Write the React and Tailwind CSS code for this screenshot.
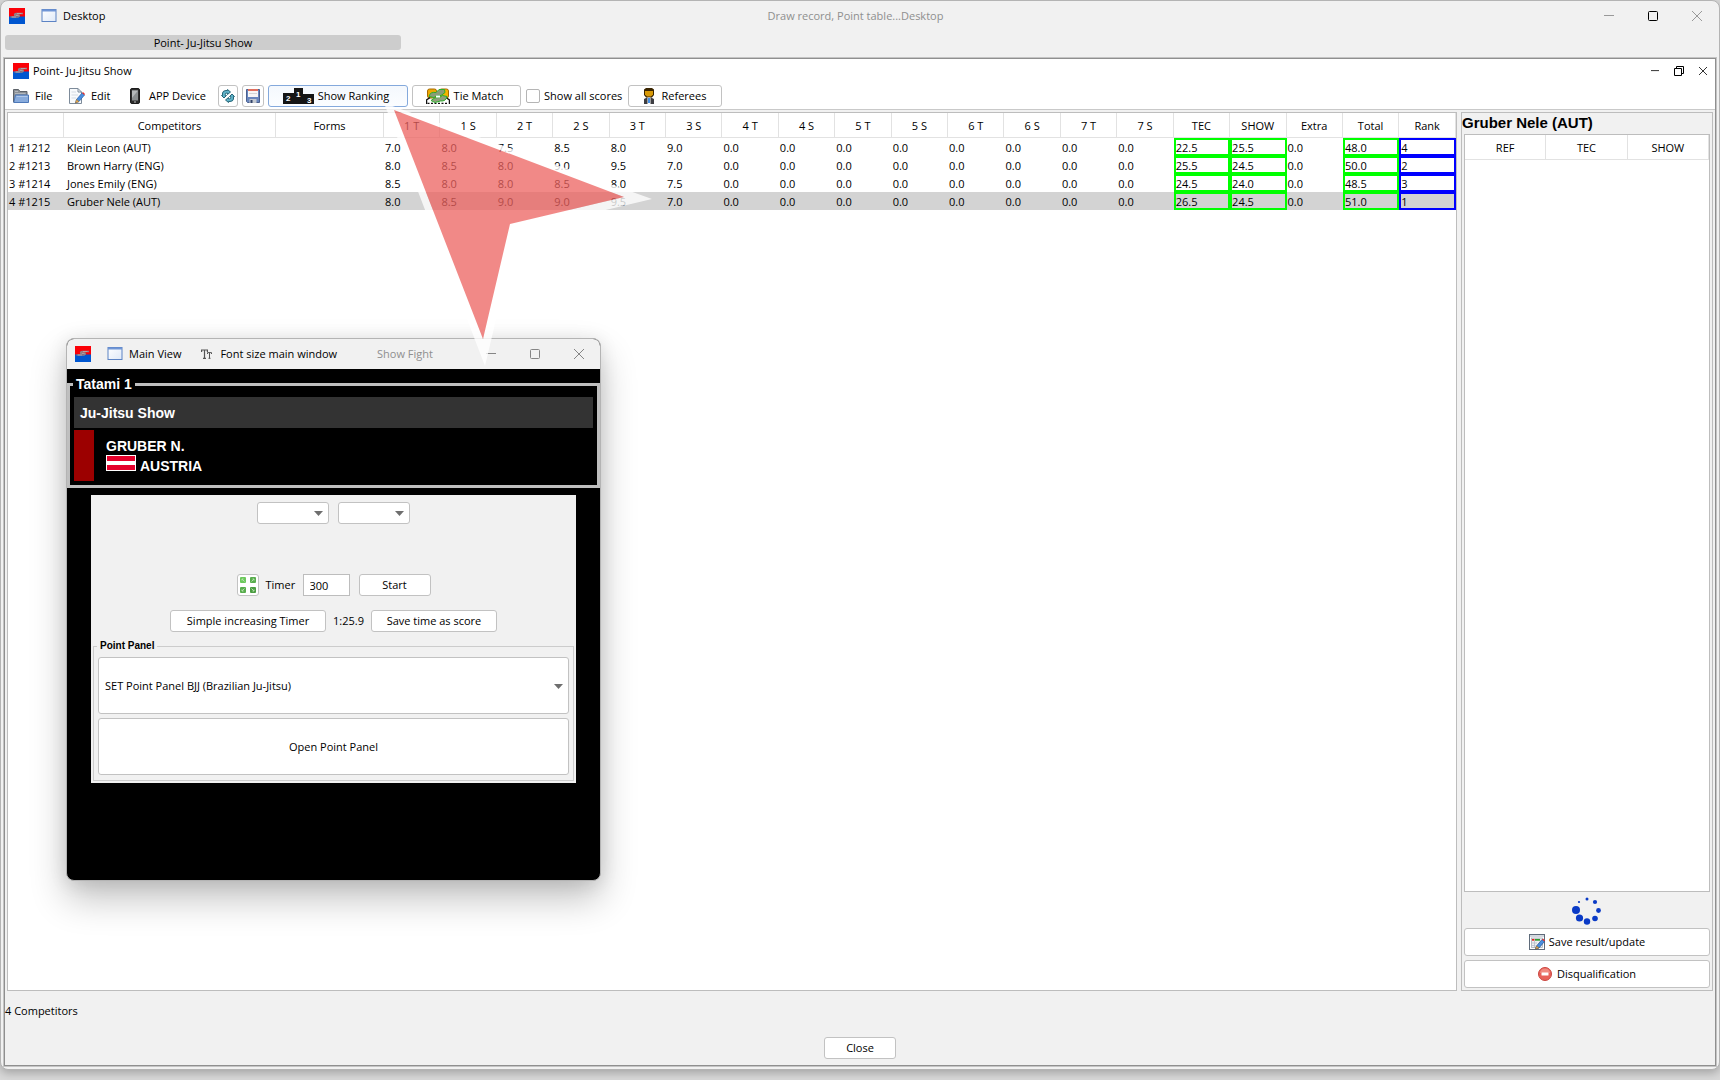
import React from 'react';

const scoreColumns = ['1 T', '1 S', '2 T', '2 S', '3 T', '3 S', '4 T', '4 S', '5 T', '5 S', '6 T', '6 S', '7 T', '7 S'];

const competitors = [
  { id: '1 #1212', name: 'Klein Leon (AUT)', scores: ['7.0', '8.0', '7.5', '8.5', '8.0', '9.0'], tec: '22.5', show: '25.5', total: '48.0', rank: '4' },
  { id: '2 #1213', name: 'Brown Harry (ENG)', scores: ['8.0', '8.5', '8.0', '9.0', '9.5', '7.0'], tec: '25.5', show: '24.5', total: '50.0', rank: '2' },
  { id: '3 #1214', name: 'Jones Emily (ENG)', scores: ['8.5', '8.0', '8.0', '8.5', '8.0', '7.5'], tec: '24.5', show: '24.0', total: '48.5', rank: '3' },
  { id: '4 #1215', name: 'Gruber Nele (AUT)', scores: ['8.0', '8.5', '9.0', '9.0', '9.5', '7.0'], tec: '26.5', show: '24.5', total: '51.0', rank: '1', selected: true }
];

/* Icons */
const LogoIcon = () => (
  <svg className="w-4 h-4 shrink-0" viewBox="0 0 16 16">
    <rect width="16" height="9" fill="#fb0007" />
    <rect y="8.500" width="16" height="7.500" fill="#0056d0" />
    <path d="M14 5.500H7.500Q5 5.700 5.800 7.300H10Q11 8.300 9 9H1.500" fill="none" stroke="#8d8288" strokeWidth="1.500" />
    <path d="M12.500 5.500H8M7 7.300H9.500M7 9H3" fill="none" stroke="#bdb6ba" strokeWidth=".7" />
  </svg>
);

const FrameIcon = () => (
  <svg className="w-4 h-4 shrink-0" viewBox="0 0 16 16">
    <defs>
      <linearGradient id="frameFill" x1="0" y1="0" x2="1" y2="1">
        <stop offset="0" stopColor="#fff" />
        <stop offset="1" stopColor="#dfe9f8" />
      </linearGradient>
    </defs>
    <rect x="1" y="1.500" width="14" height="12" fill="url(#frameFill)" stroke="#5c83c4" />
    <path d="M1 2.500H15" stroke="#6f95d6" strokeWidth="2" />
  </svg>
);

const FolderIcon = () => (
  <svg className="w-4 h-4" viewBox="0 0 16 16">
    <path d="M.5 14V1.500H5.500L7 3.500H14V14Z" fill="#8b9096" stroke="#5d6269" />
    <path d="M2 3.500H5M2 5.500H12.500" stroke="#b4b8bc" />
    <path d="M2.500 7H15.500V14.500H.8Z" fill="#88abdc" stroke="#4d78b8" />
    <path d="M3.500 8.500H14.500" stroke="#b0c8ea" />
  </svg>
);

const EditIcon = () => (
  <svg className="w-4 h-4" viewBox="0 0 16 16">
    <path d="M.5 .5H9L12.500 4V15.500H.5Z" fill="#f8fafc" stroke="#7d8b9a" />
    <path d="M9 .5V4H12.500" fill="none" stroke="#7d8b9a" />
    <path d="M2.500 4H7M2.500 7H9M2.500 10H7" stroke="#d3dae2" />
    <path d="M6.500 15L7.500 11.500L13 5L15.500 7L10 13.500Z" fill="#4a8fe0" stroke="#2b5fa8" strokeWidth=".7" />
    <path d="M13 5L14 4L16 6L15.300 7Z" fill="#e03030" />
    <path d="M6.500 15L7.500 11.500L10 13.500Z" fill="#edb55a" stroke="#9a6420" strokeWidth=".5" />
  </svg>
);

const PhoneIcon = () => (
  <svg className="w-[10px] h-4" viewBox="0 0 10 16">
    <rect x=".5" y=".5" width="9" height="15" rx="1.500" fill="#2c2c2c" stroke="#1c1c1c" />
    <rect x="2" y="2.500" width="6" height="10" fill="#8a8e8f" />
    <path d="M2 2.500H8L2 10Z" fill="#b5b9ba" />
    <rect x="4" y="13.500" width="2" height="1" fill="#bbb" />
  </svg>
);

const RefreshIcon = () => (
  <svg className="w-[14px] h-[14px]" viewBox="0 0 14 14">
    <g fill="#5fb3c9" stroke="#17596c" strokeWidth=".9" strokeLinejoin="round">
      <path d="M1.500 6.500V4Q2 1.500 5 1.500H6.500V.5L9.500 3L6.500 5.500V4.200H5.200Q4.300 4.200 4.300 5.500V6.500H5.500L3 9L.5 6.500Z" />
      <path d="M12.500 7.500V10Q12 12.500 9 12.500H7.500V13.500L4.500 11L7.500 8.500V9.800H8.800Q9.700 9.800 9.700 8.500V7.500H8.500L11 5L13.500 7.500Z" />
    </g>
  </svg>
);

const FloppyIcon = () => (
  <svg className="w-[14px] h-[14px]" viewBox="0 0 14 14">
    <path d="M.5 .5H13.500V13.500H1.500L.5 12.500Z" fill="#6886bd" stroke="#4a5f8e" />
    <rect x="2" y="0" width="10" height="8" fill="#f6f6f6" />
    <rect x="2" y="0" width="10" height="2" fill="#e0705f" />
    <path d="M3 4.500H11" stroke="#d5d5d5" />
    <rect x="3.500" y="10" width="7" height="4" fill="#c3c8d0" />
    <rect x="4.500" y="11" width="2" height="3" fill="#33446a" />
  </svg>
);

const PodiumIcon = () => (
  <svg className="w-[31px] h-4" viewBox="0 0 31 16">
    <path d="M0 5H11V0H20V6H31V16H0Z" fill="#151515" />
    <g fill="#fff" fontFamily="Liberation Sans, sans-serif" fontWeight="bold" fontSize="8">
      <text x="3" y="13">2</text>
      <text x="13" y="9">1</text>
      <text x="24" y="15">3</text>
    </g>
  </svg>
);

const TieIcon = () => (
  <svg className="w-6 h-4" viewBox="0 0 24 16">
    <rect x="1.500" y="1" width="9" height="9" rx="2" fill="#eda900" stroke="#a86a00" />
    <rect x="13.500" y="1" width="9" height="9" rx="2" fill="#f5b400" stroke="#a86a00" />
    <path d="M.5 16V12L4 9.500M23.500 16V12L20 9.500" fill="none" stroke="#111" strokeWidth="1.500" />
    <path d="M1.500 15.500H22.500" stroke="#111" strokeWidth="1.500" strokeDasharray="2 1.500" />
    <path d="M3 8.500Q4 3.500 10 4.500L13 1.500H18.500L19 4.500L15 7.500Q10 6.500 8 9.500Z" fill="#8a9c78" stroke="#2bae2b" />
    <path d="M21 8.500Q20 13.500 14.500 13L9 14.500L5 12.500L9 9.800Q14 10.500 16.500 7.500Z" fill="#8f9f7c" stroke="#2bae2b" />
    <path d="M10 8.500H14" stroke="#fff" strokeWidth="2" />
  </svg>
);

const RefereeIcon = () => (
  <svg className="w-[10px] h-4" viewBox="0 0 10 16">
    <path d="M0 16V11L3 9.500H7L10 11V16Z" fill="#3e3e42" />
    <path d="M0 1.500L2 0H8L10 1.500V7L8 9.500H2L0 7Z" fill="#3a2500" />
    <path d="M1 3H9V6.500L7 8.500H3L1 6.500Z" fill="#d89a08" />
    <path d="M3.500 9.500H6.500V16H3.500Z" fill="#fff" />
    <path d="M4.200 10H5.800V15H4.200Z" fill="#1473e0" />
  </svg>
);

const FontSizeIcon = () => (
  <svg className="w-[11px] h-[10px]" viewBox="0 0 11 10">
    <path d="M.6 3V1H6.400V3M3.500 1V9.300M2 9.300H5" fill="none" stroke="#555" strokeWidth="1.200" />
    <path d="M6.500 5V3.600H10.500V5M8.500 3.600V9.300M7.500 9.300H9.500" fill="none" stroke="#555" />
  </svg>
);

const ExpandIcon = () => (
  <svg className="w-[18px] h-[18px]" viewBox="0 0 18 18">
    <g fill="#58ad4d">
      <rect x="1" y="1" width="6" height="6" rx="1" fill="#6cc95c" />
      <rect x="11" y="1" width="6" height="6" rx="1" />
      <rect x="1" y="11" width="6" height="6" rx="1" />
      <rect x="11" y="11" width="6" height="6" rx="1" fill="#4b9d42" />
    </g>
    <path d="M3 4.500V3H4.500M3 3L5.500 5.500M13.500 3H15V4.500M15 3L12.500 5.500M3 13.500V15H4.500M3 15L5.500 12.500M15 13.500V15H13.500M15 15L12.500 12.500" fill="none" stroke="#b4deac" />
  </svg>
);

const SaveResultIcon = () => (
  <svg className="w-4 h-4" viewBox="0 0 16 16">
    <rect x=".5" y=".5" width="15" height="15" fill="#fff" stroke="#5f6b7a" />
    <path d="M1 2H15" stroke="#a8b2c0" />
    <rect x="2.500" y="4" width="11" height="9.500" fill="#eef0f3" stroke="#9aa4b2" strokeWidth=".7" />
    <path d="M3 5.800H5.500" stroke="#e0231c" strokeWidth="1.800" />
    <path d="M6 5.800H11" stroke="#2f9a2f" strokeWidth="1.800" />
    <path d="M3 9H8M3 11.500H6.500M5.500 7V13" stroke="#b6bec9" strokeWidth=".8" />
    <path d="M6.500 15L7.500 12L13 5.500L15.500 7.500L10 14Z" fill="#4a8fe0" stroke="#234f8d" strokeWidth=".7" />
    <path d="M13 5.500L14 4.500L16 6.500L15.300 7.500Z" fill="#e03030" />
    <path d="M6.500 15L7.500 12L10 14Z" fill="#edb55a" stroke="#8a5a1c" strokeWidth=".5" />
  </svg>
);

const StopIcon = () => (
  <svg className="w-[14px] h-[14px]" viewBox="0 0 14 14">
    <circle cx="7" cy="7" r="6.500" fill="#e8625a" stroke="#c9463f" />
    <path d="M2 6A5 4.500 0 0 1 12 6Z" fill="#f08a80" />
    <rect x="3.500" y="5.500" width="7" height="3" rx=".5" fill="#fff" />
  </svg>
);

const SpinnerIcon = () => (
  <svg className="w-[30px] h-[30px]" viewBox="0 0 30 30" fill="#0a3ac6">
    <circle cx="15" cy="4" r="1.500" />
    <circle cx="23" cy="7" r="2.100" />
    <circle cx="26.500" cy="15.500" r="2.400" />
    <circle cx="23" cy="23.500" r="2.800" />
    <circle cx="15" cy="26.500" r="3.200" />
    <circle cx="7.500" cy="23" r="3.600" />
    <circle cx="4" cy="15" r="4" />
    <circle cx="7" cy="7" r="1.100" />
  </svg>
);

const MinimizeIcon = ({ size = 10 }) => (
  <svg width={size} height="10" viewBox="0 0 10 10">
    <path d="M0 4.500H10" stroke="currentColor" />
  </svg>
);

const MaximizeIcon = () => (
  <svg width="10" height="10" viewBox="0 0 10 10">
    <rect x=".5" y=".5" width="9" height="9" rx="1" fill="none" stroke="currentColor" />
  </svg>
);

const RestoreIcon = () => (
  <svg width="10" height="10" viewBox="0 0 10 10">
    <path d="M2.500 2.500V.5H9.500V7.500H7.500M.5 2.500H7.500V9.500H.5Z" fill="none" stroke="currentColor" />
  </svg>
);

const CloseIcon = ({ size = 10 }) => (
  <svg width={size} height={size} viewBox="0 0 10 10">
    <path d="M0 0L10 10M10 0L0 10" stroke="currentColor" />
  </svg>
);

const Button = ({ className = '', border = 'border-[#c2c2c2]', children, ...props }) => (
  <button
    type="button"
    className={`flex items-center justify-center rounded-[3px] border bg-white whitespace-nowrap ${border} ${className}`}
    {...props}
  >
    {children}
  </button>
);

const Select = ({ label, className, options }) => (
  <div className={`relative ${className}`}>
    <select aria-label={label} className="w-full h-full appearance-none rounded-[3px] border border-[#c2c2c2] bg-white pl-[6px]">
      {options.map((option) => (
        <option key={option}>{option}</option>
      ))}
    </select>
    <svg className="absolute right-[6px] top-1/2 -mt-[2px] w-[9px] h-[5px] pointer-events-none" viewBox="0 0 9 5">
      <path d="M0 0H9L4.500 5Z" fill="#6e6e6e" />
    </svg>
  </div>
);

const Toolbar = () => (
  <div className="flex items-center h-[26px] pl-2 whitespace-nowrap">
    <button type="button" className="flex items-center gap-[6px] w-14"><FolderIcon />File</button>
    <button type="button" className="flex items-center gap-[6px] w-[61px]"><EditIcon />Edit</button>
    <button type="button" className="flex items-center gap-[9px] w-[88px]"><PhoneIcon />APP Device</button>
    <div className="flex items-center gap-1">
      <Button className="w-5 h-[22px]" aria-label="Refresh"><RefreshIcon /></Button>
      <Button className="w-[22px] h-[22px]" aria-label="Save"><FloppyIcon /></Button>
      <Button className="w-[140px] h-[22px] gap-1 pr-1 bg-linear-to-b from-[#f4f8fd] to-[#fbfdff]" border="border-[#84a9dc]">
        <PodiumIcon />Show Ranking
      </Button>
      <Button className="w-[109px] h-[22px] gap-1 pr-1"><TieIcon />Tie Match</Button>
      <label className="flex items-center gap-1 w-[99px] pl-[1px]">
        <input type="checkbox" className="w-[14px] h-[14px] shrink-0 appearance-none rounded-[2px] border border-[#b5b5b5] bg-white" />
        Show all scores
      </label>
      <Button className="w-[94px] h-[22px] gap-2"><RefereeIcon />Referees</Button>
    </div>
  </div>
);

const headCell = 'h-[25px] border-r border-b border-[#e2e2e2] p-0 pt-[1px] text-center font-normal';
const cell = 'h-[18px] p-0 pt-[1px] pl-[1px] leading-[13px]';
const markedCell = 'border-2 p-0 pt-[1px] leading-[13px]';

const ScoreTable = () => (
  <div className="flex-1 min-w-0 border border-[#bdbdbd] bg-white">
    <table className="w-full table-fixed border-separate border-spacing-0 whitespace-nowrap">
      <colgroup>
        <col className="w-14" />
        <col className="w-[212px]" />
        <col className="w-[108px]" />
      </colgroup>
      <thead>
        <tr>
          <th className={headCell}></th>
          <th className={headCell}>Competitors</th>
          <th className={headCell}>Forms</th>
          {scoreColumns.map((column) => (
            <th key={column} className={headCell}>{column}</th>
          ))}
          <th className={headCell}>TEC</th>
          <th className={headCell}>SHOW</th>
          <th className={headCell}>Extra</th>
          <th className={headCell}>Total</th>
          <th className={headCell}>Rank</th>
        </tr>
      </thead>
      <tbody>
        {competitors.map((row) => (
          <tr key={row.id} className={row.selected ? 'bg-[#d3d3d3]' : ''}>
            <td className={cell}>{row.id}</td>
            <td className="p-0 pt-[1px] pl-[3px] leading-[13px]">{row.name}</td>
            <td className={cell}></td>
            {scoreColumns.map((column, i) => (
              <td key={column} className={cell}>{row.scores[i] || '0.0'}</td>
            ))}
            <td className={`${markedCell} border-[#00ff00]`}>{row.tec}</td>
            <td className={`${markedCell} border-[#00ff00]`}>{row.show}</td>
            <td className={cell}>0.0</td>
            <td className={`${markedCell} border-[#00ff00]`}>{row.total}</td>
            <td className={`${markedCell} border-[#0000ff]`}>{row.rank}</td>
          </tr>
        ))}
      </tbody>
    </table>
  </div>
);

const RefereePanel = () => (
  <aside className="flex flex-col w-[252px] shrink-0 border border-[#bdbdbd] px-[2px] pb-[2px]">
    <h2 className="-ml-[2px] h-[21px] font-[Liberation_Sans,sans-serif] text-[15px] leading-5 font-bold">Gruber Nele (AUT)</h2>
    <div className="flex-1 border border-[#bdbdbd] bg-white">
      <table className="w-full table-fixed border-separate border-spacing-0">
        <thead>
          <tr>
            <th className={headCell}>REF</th>
            <th className={headCell}>TEC</th>
            <th className={headCell}>SHOW</th>
          </tr>
        </thead>
      </table>
    </div>
    <div className="flex items-center justify-center h-9"><SpinnerIcon /></div>
    <div className="flex flex-col gap-1">
      <Button className="h-7 gap-1"><SaveResultIcon />Save result/update</Button>
      <Button className="h-7 gap-[5px]"><StopIcon />Disqualification</Button>
    </div>
  </aside>
);

const FightWindow = () => (
  <section className="absolute left-[66px] top-[338px] w-[535px] overflow-hidden rounded-lg border border-[#b4b4b4] bg-black shadow-[0_18px_36px_rgba(0,0,0,0.24),0_2px_18px_rgba(0,0,0,0.1)]">
    <header className="flex items-center h-[30px] bg-[#f1f1f1] pl-2 pr-4 whitespace-nowrap">
      <LogoIcon />
      <button type="button" className="flex items-center gap-[6px] ml-4"><FrameIcon />Main View</button>
      <button type="button" className="flex items-center gap-2 ml-5"><FontSizeIcon />Font size main window</button>
      <span className="ml-10 text-[#8f8f8f]">Show Fight</span>
      <div className="flex items-center gap-[34px] ml-auto text-[#858585]">
        <button type="button" aria-label="Minimize"><MinimizeIcon /></button>
        <button type="button" aria-label="Maximize"><MaximizeIcon /></button>
        <button type="button" aria-label="Close"><CloseIcon /></button>
      </div>
    </header>

    <div className="pt-2 pb-[97px]">
      {/* Tatami display */}
      <fieldset className="border-[3px] border-[#bfbfbf] px-1 pt-[6px] pb-1 font-[Liberation_Sans,sans-serif] text-[14px] leading-[14px] font-bold text-white">
        <legend className="px-[3px] -ml-[1px]">Tatami 1</legend>
        <div className="flex items-center h-[31px] bg-[#333333] px-[6px]">Ju-Jitsu Show</div>
        <div className="flex items-center gap-3 h-[51px] mt-[2px]">
          <div className="w-5 h-full bg-[#9c0000]" />
          <div className="flex flex-col pt-[2px]">
            <span className="leading-[18px]">GRUBER N.</span>
            <div className="flex items-center gap-1">
              <svg className="w-[30px] h-4 mb-[5px]" viewBox="0 0 30 16">
                <rect width="30" height="16" fill="#fff" />
                <path d="M1 3.500H29M1 12.500H29" stroke="#e4002b" strokeWidth="5" />
              </svg>
              <span className="leading-[22px]">AUSTRIA</span>
            </div>
          </div>
        </div>
      </fieldset>

      {/* Timer and point panel */}
      <div className="mt-[7px] mx-6 bg-[#f1f1f1] pt-[7px] px-[2px] pb-[2px]">
        <div className="flex justify-center gap-[9px]">
          <Select label="First value" className="w-[72px] h-[22px]" options={['']} />
          <Select label="Second value" className="w-[72px] h-[22px]" options={['']} />
        </div>
        <div className="flex items-center justify-center mt-[50px]">
          <Button className="w-[22px] h-[22px] mr-[7px]" aria-label="Expand"><ExpandIcon /></Button>
          <label htmlFor="timer" className="w-[37px]">Timer</label>
          <input id="timer" type="text" defaultValue="300" className="w-[47px] h-[22px] mr-[9px] border border-[#bdbdbd] bg-white px-[6px]" />
          <Button className="w-[72px] h-[22px]">Start</Button>
        </div>
        <div className="flex items-center justify-center gap-[7px] mt-[14px]">
          <Button className="w-[156px] h-[22px]">Simple increasing Timer</Button>
          <span>1:25.9</span>
          <Button className="w-[126px] h-[22px]">Save time as score</Button>
        </div>
        <fieldset className="flex flex-col gap-1 mt-[7px] border border-[#cccccc] px-1 pt-1 pb-[5px]">
          <legend className="-ml-[1px] px-[3px] font-[Liberation_Sans,sans-serif] text-[10px] leading-[14px] font-bold">Point Panel</legend>
          <Select label="Point panel" className="h-[57px]" options={['SET Point Panel BJJ (Brazilian Ju-Jitsu)']} />
          <Button className="h-[57px]">Open Point Panel</Button>
        </fieldset>
      </div>
    </div>
  </section>
);

const PointerArrow = () => (
  <svg className="absolute left-[380px] top-[100px] w-[275px] h-[270px] pointer-events-none" viewBox="380 100 275 270">
    <path d="M384 103L652 199L517 231L485 366ZM394 110L483 339L510 224L624 197Z" fill="#fff" fillOpacity=".78" fillRule="evenodd" />
    <path d="M394 110L624 197L510 224L483 339Z" fill="#ec625f" fillOpacity=".75" />
  </svg>
);

const App = () => {
  return (
    <div className="relative flex flex-col min-h-screen bg-[#d9d9d9] pb-[10px] font-[Open_Sans,sans-serif] text-[11px] leading-4 text-black">
      <main className="flex flex-1 flex-col rounded-lg border border-[#b4b4b4] bg-[#f1f1f1] px-[2px] pb-[2px] shadow-[0_3px_10px_rgba(0,0,0,0.25)]">
        <header className="flex items-center h-[30px] pl-[6px] pr-[15px]">
          <div className="flex flex-1 items-center gap-4">
            <LogoIcon />
            <button type="button" className="flex items-center gap-[6px]"><FrameIcon />Desktop</button>
          </div>
          <h1 className="text-[#8f8f8f]">Draw record, Point table...Desktop</h1>
          <div className="flex flex-1 items-center justify-end gap-[34px] text-[#999999]">
            <button type="button" aria-label="Minimize"><MinimizeIcon /></button>
            <button type="button" aria-label="Maximize" className="text-black"><MaximizeIcon /></button>
            <button type="button" aria-label="Close"><CloseIcon /></button>
          </div>
        </header>

        <button type="button" className="w-[396px] h-[15px] mt-1 mb-[7px] ml-[2px] rounded-[3px] bg-[#cdcdcd] leading-[15px]">Point- Ju-Jitsu Show</button>

        <div className="flex flex-1 flex-col border border-[#c4c4c4]">
          <div className="flex flex-1 flex-col border border-[#8f8f8f]">
            <div className="border-b border-[#c9c9c9] bg-white">
              <header className="flex items-center h-6 pl-2 pr-2">
                <LogoIcon />
                <span className="ml-1">Point- Ju-Jitsu Show</span>
                <div className="flex items-center gap-[15px] ml-auto">
                  <button type="button" aria-label="Minimize document"><MinimizeIcon size={8} /></button>
                  <button type="button" aria-label="Restore document"><RestoreIcon /></button>
                  <button type="button" aria-label="Close document"><CloseIcon size={8} /></button>
                </div>
              </header>
              <Toolbar />
            </div>

            <div className="flex flex-1 gap-1 pl-[2px] pr-[2px] pt-[2px]">
              <ScoreTable />
              <RefereePanel />
            </div>

            <footer>
              <p className="pt-3">4 Competitors</p>
              <div className="flex justify-center pt-[18px] pb-[6px]">
                <Button className="w-[72px] h-[22px]">Close</Button>
              </div>
            </footer>
          </div>
        </div>
      </main>

      <FightWindow />
      <PointerArrow />
    </div>
  );
};

export default App;
